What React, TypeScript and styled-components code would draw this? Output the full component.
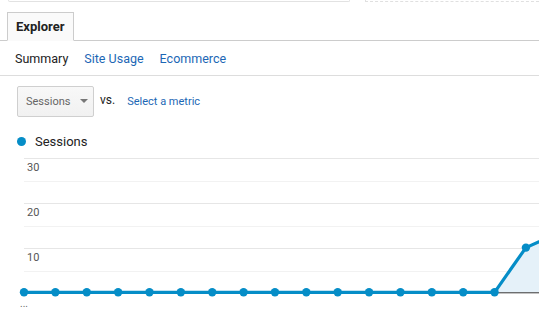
import * as React from 'react';
import styled, { createGlobalStyle } from 'styled-components';

const GlobalStyle = createGlobalStyle`
  html, body {
    margin: 0;
    padding: 0;
    background: #ffffff;
    font-family: Roboto, "Liberation Sans", Arial, sans-serif;
    overflow: hidden;
  }
`;

const Page = styled.div`
  width: 539px;
  height: 311px;
  overflow: hidden;
  position: relative;
`;

const TopStrip = styled.div`
  display: flex;
  height: 2px;
`;

const TopBox = styled.div`
  margin-left: 8px;
  width: 340px;
  height: 1px;
  border: 1px solid #e2e2e2;
  border-top: none;
  border-radius: 0 0 4px 4px;
`;

const DashedBox = styled.div`
  margin-left: 15px;
  flex: 1;
  height: 1px;
  border-bottom: 1px dashed #e0e0e0;
  border-left: 1px dashed #e0e0e0;
`;

const TabBar = styled.div`
  display: flex;
  padding: 10px 0 0 7px;
  border-bottom: 1px solid #cccccc;
`;

const Tab = styled.div`
  height: 27px;
  margin-bottom: -1px;
  padding: 0 9px 0 8px;
  display: flex;
  align-items: center;
  border: 1px solid #cccccc;
  border-bottom: 1px solid #fafafa;
  background: #fafafa;
  font-size: 13px;
  font-weight: 700;
  color: #222222;
`;

const SubNav = styled.div`
  display: flex;
  gap: 16px;
  align-items: center;
  height: 34px;
  padding-left: 15px;
  border-bottom: 1px solid #dddddd;
  font-size: 12.5px;
`;

const NavItem = styled.span<{ $active?: boolean }>`
  color: ${(p) => (p.$active ? '#222222' : '#1c67b5')};
  cursor: pointer;
`;

const Controls = styled.div`
  display: flex;
  align-items: center;
  padding: 10px 0 0 17px;
  height: 30px;
`;

const Select = styled.div`
  box-sizing: border-box;
  width: 77px;
  height: 31px;
  display: flex;
  align-items: center;
  gap: 10px;
  padding: 0 0 0 8px;
  border: 1px solid #cfcfcf;
  border-radius: 2px;
  background: linear-gradient(#f8f8f8, #f1f1f1);
  font-size: 11px;
  color: #666666;
`;

const Caret = styled.span`
  width: 0;
  height: 0;
  border-left: 4px solid transparent;
  border-right: 4px solid transparent;
  border-top: 4px solid #777777;
`;

const Versus = styled.span`
  margin: 0 0 2px 6px;
  font-size: 12px;
  color: #222222;
`;

const MetricLink = styled.span`
  margin-left: 12px;
  font-size: 11px;
  color: #1c67b5;
  cursor: pointer;
`;

const Legend = styled.div`
  display: flex;
  align-items: center;
  gap: 9px;
  padding: 16px 0 0 17px;
  height: 18px;
  font-size: 13px;
  color: #222222;
`;

const Dot = styled.span`
  width: 9px;
  height: 9px;
  border-radius: 50%;
  background: #058dc7;
`;

const ChartArea = styled.div`
  height: 161px;
  overflow: hidden;
`;

const BLUE = '#058dc7';
const STEP = 31.37;
const X0 = 24;
const BASE = 142.3;
const UNIT = 4.47;

const values = [0, 0, 0, 0, 0, 0, 0, 0, 0, 0, 0, 0, 0, 0, 0, 0, 10, 13.2];

const Chart: React.FC = () => {
  const pts = values.map((v, i) => [X0 + i * STEP, BASE - v * UNIT]);
  const line = pts.map((p) => p.join(',')).join(' ');
  const last = pts.length - 1;
  const area = `${pts[15][0]},${BASE} ${pts.slice(15).map((p) => p.join(',')).join(' ')} ${pts[last][0]},${BASE}`;
  const grid = [8, 31, 53, 76, 98, 121];
  return (
    <svg width="600" height="161" viewBox="0 0 600 161">
      {grid.map((y, i) => (
        <line key={y} x1={X0} x2={600} y1={y + 0.5} y2={y + 0.5} stroke={i % 2 ? '#f2f2f2' : '#e6e6e6'} strokeWidth={1} />
      ))}
      {['30', '20', '10'].map((t, i) => (
        <text key={t} x={27} y={21 + i * 45} fontSize="11" fill="#555" fontFamily="Roboto, 'Liberation Sans', sans-serif">
          {t}
        </text>
      ))}
      <polygon points={area} fill="#e5f1f9" />
      <line x1={X0} x2={600} y1={BASE + 0.5} y2={BASE + 0.5} stroke="#333" strokeWidth={1} />
      <polyline points={line} fill="none" stroke={BLUE} strokeWidth={3.2} strokeLinejoin="round" />
      {pts.map(([x, y], i) => (
        <circle key={i} cx={x} cy={y} r={4.2} fill={BLUE} />
      ))}
      <text x={20} y={157} fontSize="10" fill="#666" fontFamily="Roboto, 'Liberation Sans', sans-serif">
        ...
      </text>
    </svg>
  );
};

const App: React.FC = () => (
  <Page>
    <GlobalStyle />
    <TopStrip>
      <TopBox />
      <DashedBox />
    </TopStrip>
    <TabBar>
      <Tab>Explorer</Tab>
    </TabBar>
    <SubNav>
      <NavItem $active>Summary</NavItem>
      <NavItem>Site Usage</NavItem>
      <NavItem>Ecommerce</NavItem>
    </SubNav>
    <Controls>
      <Select>
        Sessions
        <Caret />
      </Select>
      <Versus>vs.</Versus>
      <MetricLink>Select a metric</MetricLink>
    </Controls>
    <Legend>
      <Dot />
      Sessions
    </Legend>
    <ChartArea>
      <Chart />
    </ChartArea>
  </Page>
);

export default App;
